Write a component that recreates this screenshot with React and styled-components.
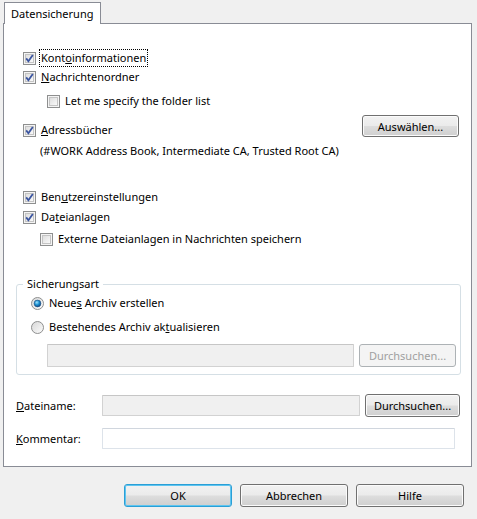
import styled, { createGlobalStyle } from 'styled-components';

const GlobalStyle = createGlobalStyle`
  html, body {
    margin: 0;
    padding: 0;
    background: #f0f0f0;
  }
  body {
    font-family: "Noto Sans", "Open Sans", sans-serif;
    font-size: 11px;
    color: #000;
  }
`;

function CheckBox({ checked }) {
  return (
    <BoxWrap>
      <svg width="13" height="13" viewBox="0 0 13 13">
        <defs>
          <linearGradient id="cbg" x1="0" y1="0" x2="1" y2="1">
            <stop offset="0" stopColor="#dcdcdc" />
            <stop offset="1" stopColor="#fbfbfb" />
          </linearGradient>
        </defs>
        <rect x="0.5" y="0.5" width="12" height="12" fill="#f4f4f4" stroke="#8e8f8f" />
        <rect x="2.5" y="2.5" width="8" height="8" fill="url(#cbg)" stroke="#c4c4c4" />
        {checked && (
          <path d="M3.2 6.4 L5.4 9.2 L9.8 3" fill="none" stroke="#3b55a0" strokeWidth="1.8" />
        )}
      </svg>
    </BoxWrap>
  );
}

function Radio({ checked }) {
  return (
    <BoxWrap>
      <svg width="13" height="13" viewBox="0 0 13 13">
        <defs>
          <linearGradient id="rbg" x1="0" y1="0" x2="1" y2="1">
            <stop offset="0" stopColor="#d6d6d6" />
            <stop offset="1" stopColor="#fdfdfd" />
          </linearGradient>
          <radialGradient id="rdot" cx="0.4" cy="0.35" r="0.7">
            <stop offset="0" stopColor="#9fe3ff" />
            <stop offset="0.5" stopColor="#1a8fd0" />
            <stop offset="1" stopColor="#0d3f7c" />
          </radialGradient>
        </defs>
        <circle cx="6.5" cy="6.5" r="6" fill="url(#rbg)" stroke="#8e8f8f" />
        {checked && <circle cx="6.5" cy="6.5" r="3.4" fill="url(#rdot)" stroke="#214f80" strokeWidth="0.6" />}
      </svg>
    </BoxWrap>
  );
}

export default function App() {
  return (
    <>
      <GlobalStyle />
      <Dialog>
        <TabStrip>
          <Tab>Datensicherung</Tab>
        </TabStrip>
        <Pane>
          <Line $top={25} $indent={19}>
            <CheckBox checked />
            <Label $focus>Kont<u>o</u>informationen</Label>
          </Line>
          <Line $top={1} $indent={19}>
            <CheckBox checked />
            <Label><u>N</u>achrichtenordner</Label>
          </Line>
          <Line $top={6} $indent={43}>
            <CheckBox />
            <Label>Let me specify the folder list</Label>
          </Line>
          <SplitRow>
            <Line $top={6} $indent={19}>
              <CheckBox checked />
              <Label><u>A</u>dressbücher</Label>
            </Line>
            <Button $width={97} $height={22}>Auswählen...</Button>
          </SplitRow>
          <Line $top={2} $indent={36}>
            <Note>(#WORK Address Book, Intermediate CA, Trusted Root CA)</Note>
          </Line>
          <Line $top={29} $indent={19}>
            <CheckBox checked />
            <Label>Ben<u>u</u>tzereinstellungen</Label>
          </Line>
          <Line $top={2} $indent={19}>
            <CheckBox checked />
            <Label>Da<u>t</u>eianlagen</Label>
          </Line>
          <Line $top={4} $indent={36}>
            <CheckBox />
            <Label>Externe Dateianlagen in Nachrichten speichern</Label>
          </Line>

          <Group>
            <Legend>Sicherungsart</Legend>
            <Line $top={2} $indent={14}>
              <Radio checked />
              <Label>Neue<u>s</u> Archiv erstellen</Label>
            </Line>
            <Line $top={6} $indent={14}>
              <Radio />
              <Label>Bestehendes Archiv ak<u>t</u>ualisieren</Label>
            </Line>
            <FieldRow $top={8} $indent={30}>
              <Field $width={308} $height={23} $disabled />
              <Button $width={97} $height={23} disabled>Durchsuchen...</Button>
            </FieldRow>
          </Group>

          <FieldRow $top={19} $indent={12}>
            <FieldLabel><u>D</u>ateiname:</FieldLabel>
            <Field $width={258} $height={21} $disabled />
            <Button $width={95} $height={23}>Durchsuchen...</Button>
          </FieldRow>
          <FieldRow $top={11} $indent={12}>
            <FieldLabel><u>K</u>ommentar:</FieldLabel>
            <Field $width={353} $height={21} />
          </FieldRow>
        </Pane>
        <Footer>
          <Button $width={108} $height={23} $default>OK</Button>
          <Button $width={108} $height={23}>Abbrechen</Button>
          <Button $width={108} $height={23}>Hilfe</Button>
        </Footer>
      </Dialog>
    </>
  );
}

const Dialog = styled.div`
  width: 477px;
  height: 519px;
  box-sizing: border-box;
  padding: 2px 5px 0 3px;
  display: flex;
  flex-direction: column;
`;

const TabStrip = styled.div`
  display: flex;
  padding-left: 1px;
  height: 21px;
  position: relative;
  z-index: 1;
`;

const Tab = styled.div`
  width: 97px;
  height: 22px;
  box-sizing: border-box;
  border: 1px solid #898c95;
  border-bottom: none;
  background: #fff;
  padding: 0 0 0 6px;
  line-height: 21px;
`;

const Pane = styled.div`
  height: 444px;
  box-sizing: border-box;
  border: 1px solid #898c95;
  background: #fff;
  display: flex;
  flex-direction: column;
`;

const Line = styled.div`
  display: flex;
  align-items: center;
  height: 18px;
  margin-top: ${(p) => p.$top || 0}px;
  padding-left: ${(p) => p.$indent || 0}px;
`;

const SplitRow = styled.div`
  display: flex;
  justify-content: space-between;
  align-items: flex-start;
  margin-top: 5px;
  padding-right: 12px;

  & > ${Line} {
    margin-top: 6px;
  }
`;

const BoxWrap = styled.span`
  display: inline-flex;
  width: 13px;
  height: 13px;
  flex-shrink: 0;
`;

const Label = styled.span`
  margin-left: 3px;
  padding: 0 1px;
  line-height: 16px;
  border: 1px dotted ${(p) => (p.$focus ? '#000' : 'transparent')};
  white-space: nowrap;
`;

const Note = styled.span`
  white-space: nowrap;
`;

const Group = styled.fieldset`
  margin: 28px 10px 0 12px;
  padding: 0 4px 7px 0;
  border: 1px solid #d5dfe5;
  border-radius: 3px;
  min-width: 0;
`;

const Legend = styled.legend`
  margin-left: 6px;
  padding: 0 4px;
  line-height: 16px;
`;

const FieldRow = styled.div`
  display: flex;
  align-items: center;
  gap: 5px;
  margin-top: ${(p) => p.$top || 0}px;
  padding-left: ${(p) => p.$indent || 0}px;
`;

const FieldLabel = styled.span`
  width: 86px;
  margin-right: -5px;
  white-space: nowrap;
`;

const Field = styled.div`
  width: ${(p) => p.$width}px;
  height: ${(p) => p.$height}px;
  box-sizing: border-box;
  border: 1px solid ${(p) => (p.$disabled ? '#d2d2d2' : '#dde3ea')};
  border-top-color: ${(p) => (p.$disabled ? '#c6c6c6' : '#d0d6de')};
  background: ${(p) => (p.$disabled ? '#f0f0f0' : '#fff')};
  border-radius: 1px;
`;

const Button = styled.button`
  width: ${(p) => p.$width}px;
  height: ${(p) => p.$height}px;
  box-sizing: border-box;
  flex-shrink: 0;
  font: inherit;
  padding: 0;
  border-radius: 3px;
  color: #000;
  border: 1px solid ${(p) => (p.$default ? '#2b9fd6' : '#707070')};
  box-shadow: ${(p) => (p.$default ? 'inset 0 0 0 1px #5ec5f0' : 'inset 0 0 0 1px #fbfbfb')};
  background: linear-gradient(#f2f2f2 0%, #ebebeb 48%, #dddddd 52%, #cfcfcf 100%);

  &:disabled {
    color: #a0a0a0;
    border-color: #adb2b5;
    box-shadow: none;
    background: #f4f4f4;
  }
`;

const Footer = styled.div`
  display: flex;
  justify-content: flex-end;
  gap: 8px;
  margin-top: 17px;
  padding-right: 8px;
`;
